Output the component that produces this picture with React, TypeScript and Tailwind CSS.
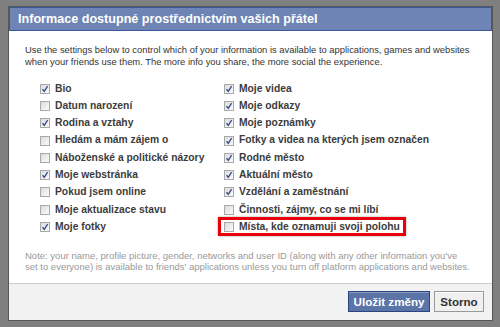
import React from "react";

const left: [string, boolean][] = [
  ["Bio", true],
  ["Datum narození", false],
  ["Rodina a vztahy", true],
  ["Hledám a mám zájem o", false],
  ["Náboženské a politické názory", false],
  ["Moje webstránka", true],
  ["Pokud jsem online", false],
  ["Moje aktualizace stavu", false],
  ["Moje fotky", true],
];

const right: [string, boolean][] = [
  ["Moje videa", true],
  ["Moje odkazy", true],
  ["Moje poznámky", true],
  ["Fotky a videa na kterých jsem označen", true],
  ["Rodné město", true],
  ["Aktuální město", true],
  ["Vzdělání a zaměstnání", true],
  ["Činnosti, zájmy, co se mi líbí", false],
  ["Místa, kde oznamuji svoji polohu", false],
];

function Box({ checked }: { checked: boolean }) {
  return (
    <span className="w-[10px] h-[10px] shrink-0 border border-[#a9a9a9] bg-gradient-to-br from-[#dcdcdc] to-[#fbfbfb] flex items-center justify-center">
      {checked && (
        <svg width="8" height="8" viewBox="0 0 8 8">
          <path d="M1.5 4.2 L3.3 6.3 L6.6 1.2" fill="none" stroke="#3b4f8c" strokeWidth="1.4" />
        </svg>
      )}
    </span>
  );
}

function Row({ label, checked, hi }: { label: string; checked: boolean; hi?: boolean }) {
  const inner = (
    <div className="flex items-center gap-[5px] h-[17.27px]">
      <Box checked={checked} />
      <span className="text-[10.3px] font-bold text-[#3c3c3c] whitespace-nowrap leading-none">{label}</span>
    </div>
  );
  if (hi) {
    return (
      <div className="h-[17.27px] flex items-center">
        <div className="-ml-[6px] pl-[3px] w-[188px] border-[3px] border-[#e8000b] shadow-[0_0_2px_rgba(0,0,0,0.4)] h-[19px] flex items-center">
          {inner}
        </div>
      </div>
    );
  }
  return inner;
}

export default function App() {
  return (
    <div
      className="w-[500px] h-[327px] bg-[#7f7f7f] pl-[8px] pt-[6px] overflow-hidden"
      style={{ fontFamily: '"Liberation Sans", Arial, sans-serif' }}
    >
      <div className="w-[485px] h-[315px] border border-[#565656] bg-white flex flex-col">
        <div className="h-[24px] bg-[#6d84b4] border border-[#3b5998] flex items-center pl-[8px] shrink-0">
          <span className="text-white font-bold text-[12.6px] leading-none">
            Informace dostupné prostřednictvím vašich přátel
          </span>
        </div>
        <div className="flex-1 flex flex-col pl-[16px] pr-[4px]">
          <p className="mt-[12.7px] text-[9.4px] leading-[12px] text-[#333] whitespace-nowrap">
            Use the settings below to control which of your information is available to applications, games and websites
            <br />
            when your friends use them. The more info you share, the more social the experience.
          </p>
          <div className="mt-[12.5px] pl-[15px] flex">
            <div className="w-[184px] flex flex-col">
              {left.map(([l, c]) => (
                <Row key={l} label={l} checked={c} />
              ))}
            </div>
            <div className="flex flex-col">
              {right.map(([l, c], i) => (
                <Row key={l} label={l} checked={c} hi={i === 8} />
              ))}
            </div>
          </div>
          <p className="mt-[14.5px] text-[9.5px] leading-[11px] text-[#999] whitespace-nowrap">
            Note: your name, profile picture, gender, networks and user ID (along with any other information you&apos;ve
            <br />
            set to everyone) is available to friends&apos; applications unless you turn off platform applications and websites.
          </p>
        </div>
        <div className="h-[37px] shrink-0 border-t border-[#cccccc] bg-[#f2f2f2] flex justify-end items-start pt-[7px] pr-[8px] gap-[4px]">
          <button className="h-[21px] w-[82px] bg-[#5b74a8] border border-[#29447e] text-white font-bold text-[11.6px] flex items-center justify-center shadow-[inset_0_1px_0_#8a9cc2]">
            Uložit změny
          </button>
          <button className="h-[21px] w-[50px] bg-[#f0f0f0] border border-[#999] text-[#333] font-bold text-[11.6px] flex items-center justify-center shadow-[inset_0_1px_0_#fff]">
            Storno
          </button>
        </div>
      </div>
    </div>
  );
}
